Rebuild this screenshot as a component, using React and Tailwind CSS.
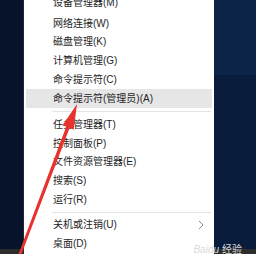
import React from "react";

const top = ["网络连接(W)", "磁盘管理(K)", "计算机管理(G)", "命令提示符(C)"];
const mid = ["任务管理器(T)", "控制面板(P)", "文件资源管理器(E)", "搜索(S)", "运行(R)"];

function Item({ label, active, chevron, extra = "" }) {
  return (
    <div
      className={
        "mx-[2px] h-[18.75px] flex items-center pl-[27px] pr-[6px] text-[10px] leading-none text-[#1e1e1e] " +
        (active ? "bg-[#e6e6e6] " : "") +
        extra
      }
    >
      <span className="flex-1 whitespace-nowrap">{label}</span>
      {chevron && (
        <svg width="6" height="10" viewBox="0 0 6 10" className="mr-[2px]">
          <path d="M1 1 L5 5 L1 9" fill="none" stroke="#8a8a8a" strokeWidth="1" />
        </svg>
      )}
    </div>
  );
}

function Sep({ h }) {
  return (
    <div className={"flex items-center pl-[28px] pr-[3px] " + h}>
      <div className="h-px w-full bg-[#e3e3e3]" />
    </div>
  );
}

export default function App() {
  return (
    <div
      className="relative w-[256px] h-[254px] overflow-hidden flex bg-[#0a1830]"
      style={{ fontFamily: '"Liberation Sans", "Noto Sans CJK SC", sans-serif' }}
    >
      <div className="w-[24px] flex flex-col bg-[#07132a]">
        <div className="flex-1 border-r border-[#1c2a40]" />
        <div className="h-[5px] bg-[#2d2d2d]" />
      </div>
      <div className="w-[190px] bg-white flex flex-col">
        <div className="-mt-[4.6px] flex flex-col">
          <Item label="设备管理器(M)" extra="pb-[4px]" />
          {top.map((t) => (
            <Item key={t} label={t} />
          ))}
          <Item label="命令提示符(管理员)(A)" active />
          <Sep h="h-[7.6px]" />
          {mid.map((t) => (
            <Item key={t} label={t} />
          ))}
          <Sep h="h-[6.2px]" />
          <Item label="关机或注销(U)" chevron />
          <Item label="桌面(D)" />
        </div>
      </div>
      <div className="flex-1 flex flex-col">
        <div className="h-[75px] bg-[#0b2448]" />
        <div className="flex-1 bg-[#0a1c3b]" />
        <div className="h-[5px] bg-[#2d2d2d]" />
      </div>

      <svg className="absolute left-0 top-0" width="256" height="254" viewBox="0 0 256 254">
        <polygon points="77,104 62.5,125.5 66.3,126.6 18.5,254 21.5,254 69.5,128.2 73.7,129.6" fill="#e8322d" />
      </svg>

      <div className="absolute right-[14px] bottom-[-1px] flex items-end gap-[3px] text-[10px] leading-none">
        <span className="text-[#d9d9d9] italic">Baidu</span>
        <span className="text-[#d8d8d8]">经验</span>
      </div>
    </div>
  );
}
